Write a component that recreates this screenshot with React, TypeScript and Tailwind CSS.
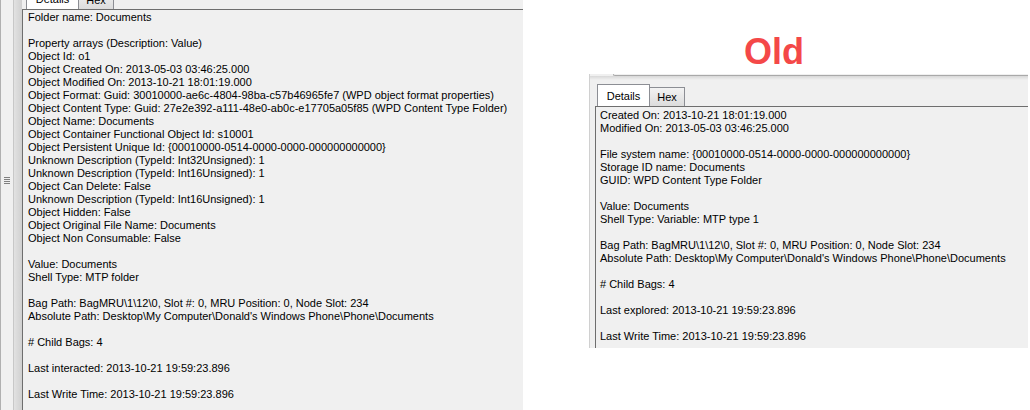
const NEW_LINES = [
  'Folder name: Documents',
  '',
  'Property arrays (Description: Value)',
  'Object Id: o1',
  'Object Created On: 2013-05-03 03:46:25.000',
  'Object Modified On: 2013-10-21 18:01:19.000',
  'Object Format: Guid: 30010000-ae6c-4804-98ba-c57b46965fe7 (WPD object format properties)',
  'Object Content Type: Guid: 27e2e392-a111-48e0-ab0c-e17705a05f85 (WPD Content Type Folder)',
  'Object Name: Documents',
  'Object Container Functional Object Id: s10001',
  'Object Persistent Unique Id: {00010000-0514-0000-0000-000000000000}',
  'Unknown Description (TypeId: Int32Unsigned): 1',
  'Unknown Description (TypeId: Int16Unsigned): 1',
  'Object Can Delete: False',
  'Unknown Description (TypeId: Int16Unsigned): 1',
  'Object Hidden: False',
  'Object Original File Name: Documents',
  'Object Non Consumable: False',
  '',
  'Value: Documents',
  'Shell Type: MTP folder',
  '',
  'Bag Path: BagMRU\\1\\12\\0, Slot #: 0, MRU Position: 0, Node Slot: 234',
  "Absolute Path: Desktop\\My Computer\\Donald's Windows Phone\\Phone\\Documents",
  '',
  '# Child Bags: 4',
  '',
  'Last interacted: 2013-10-21 19:59:23.896',
  '',
  'Last Write Time: 2013-10-21 19:59:23.896',
];

const OLD_LINES = [
  'Created On: 2013-10-21 18:01:19.000',
  'Modified On: 2013-05-03 03:46:25.000',
  '',
  'File system name: {00010000-0514-0000-0000-000000000000}',
  'Storage ID name: Documents',
  'GUID: WPD Content Type Folder',
  '',
  'Value: Documents',
  'Shell Type: Variable: MTP type 1',
  '',
  'Bag Path: BagMRU\\1\\12\\0, Slot #: 0, MRU Position: 0, Node Slot: 234',
  "Absolute Path: Desktop\\My Computer\\Donald's Windows Phone\\Phone\\Documents",
  '',
  '# Child Bags: 4',
  '',
  'Last explored: 2013-10-21 19:59:23.896',
  '',
  'Last Write Time: 2013-10-21 19:59:23.896',
];

function Lines({ lines }: { lines: string[] }) {
  return (
    <>
      {lines.map((l, i) => (
        <div key={i} className="h-[13px] whitespace-pre">
          {l || '\u00a0'}
        </div>
      ))}
    </>
  );
}

function Tabs() {
  return (
    <>
      <div className="w-[53px] h-[22px] shrink-0 bg-white border border-b-0 border-[#8c8e94] text-center pt-[5px]">
        Details
      </div>
      <div className="w-[35px] h-[19px] shrink-0 bg-gradient-to-b from-[#f3f3f3] to-[#dcdcdc] border border-l-0 border-b-0 border-[#8c8e94] text-center pt-[3px]">
        Hex
      </div>
    </>
  );
}

export default function App() {
  return (
    <div
      className="w-[1030px] h-[410px] bg-white flex overflow-hidden text-[11px] leading-[13px] text-black"
      style={{ fontFamily: '"Liberation Sans", Arial, sans-serif' }}
    >
      {/* new version */}
      <div className="w-[523px] h-full bg-[#f0f0f0] flex shrink-0">
        <div className="w-[13px] h-full border-l border-[#b0b0b0] flex justify-center pt-[177px]">
          <div className="flex flex-col gap-[1px]">
            <div className="w-[6px] h-[1px] bg-[#808080]" />
            <div className="w-[6px] h-[1px] bg-[#808080]" />
            <div className="w-[6px] h-[1px] bg-[#808080]" />
            <div className="w-[6px] h-[1px] bg-[#808080]" />
          </div>
        </div>
        <div className="w-[9px] h-full border-l border-[#c8c8c8] bg-gradient-to-r from-[#e2e2e2] to-[#d0d0d0]" />
        <div className="flex-1 flex flex-col min-w-0">
          <div className="h-[9px] flex items-end pl-[4px] shrink-0">
            <Tabs />
          </div>
          <div className="flex-1 border-t border-l border-[#6e6e6e] pl-[5px] pt-[1px] overflow-hidden">
            <Lines lines={NEW_LINES} />
          </div>
        </div>
      </div>

      {/* old version */}
      <div className="flex-1 flex flex-col">
        <div className="mt-[32px] h-[40px] text-center pr-[5px] text-[36px] leading-[40px] font-bold text-[#f44848]">
          Old
        </div>
        <div className="ml-[66px] mt-[2px] w-[439px] h-[274px] bg-[#f0f0f0] border-l border-[#d0d0d0] flex flex-col">
          <div className="ml-[23px] h-[2px] border-b border-l border-[#a9a9a9] rounded-bl-[3px]" />
          <div className="h-[4px] bg-gradient-to-b from-[#d8d8d8] to-[#f0f0f0]" />
          <div className="mt-[4px] h-[22px] flex items-end pl-[7px] shrink-0">
            <Tabs />
          </div>
          <div className="flex-1 ml-[5px] border-t border-l border-[#6e6e6e] pl-[4px] pt-[2px] overflow-hidden">
            <Lines lines={OLD_LINES} />
          </div>
        </div>
      </div>
    </div>
  );
}
